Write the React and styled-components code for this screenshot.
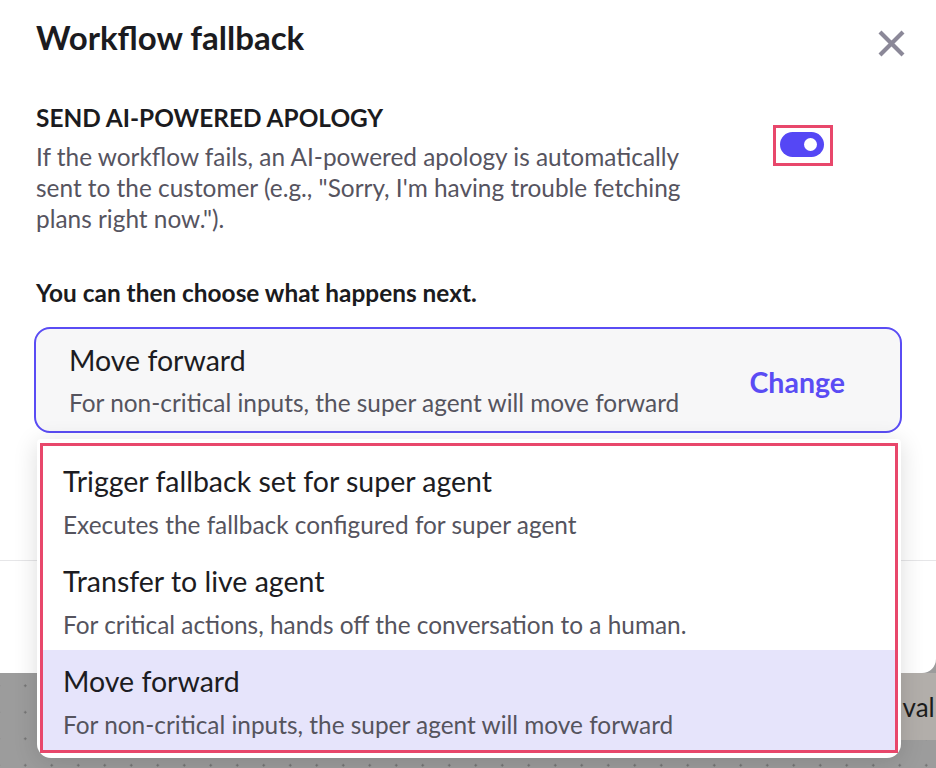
import React from "react";
import styled, { createGlobalStyle } from "styled-components";

const GlobalStyle = createGlobalStyle`
  html, body { margin: 0; padding: 0; }
  body {
    font-family: Lato, "Open Sans", sans-serif;
    background-color: #9c9c9c;
    background-image: radial-gradient(circle, #6f6f6f 0.9px, transparent 1.4px);
    background-size: 26.5px 26.5px;
    background-position: 12px 10px;
  }
  * { box-sizing: border-box; }
`;

const Page = styled.div`
  position: relative;
  width: 936px;
  height: 768px;
  overflow: hidden;
`;

const CanvasNode = styled.div`
  position: absolute;
  left: 850px;
  top: 673px;
  width: 120px;
  height: 67px;
  background: #b2aeaa;
  display: flex;
  align-items: center;
  padding-left: 32px;
  font-size: 26px;
  color: #1c1c1c;
  white-space: nowrap;
`;

const Modal = styled.div`
  position: relative;
  z-index: 1;
  width: 936px;
  height: 673px;
  background: #ffffff;
  border-radius: 0 0 14px 0;
  display: flex;
  flex-direction: column;
  padding: 18px 0 0 36px;
`;

const Header = styled.div`
  display: flex;
  justify-content: space-between;
  align-items: flex-start;
  height: 40px;
  padding-right: 31px;
`;

const Title = styled.h2`
  margin: 0;
  font-size: 33px;
  line-height: 38px;
  font-weight: 700;
  color: #1b1b20;
`;

const CloseButton = styled.button`
  border: none;
  background: none;
  padding: 0;
  margin-top: 12px;
  width: 27px;
  height: 27px;
  display: flex;
  cursor: pointer;
`;

const Section = styled.div`
  display: flex;
  justify-content: space-between;
  align-items: flex-start;
  margin-top: 45px;
  padding-right: 103px;
`;

const SectionText = styled.div`
  width: 670px;
`;

const SectionHeading = styled.div`
  font-size: 24.4px;
  line-height: 30px;
  font-weight: 700;
  color: #1b1b20;
`;

const SectionDesc = styled.p`
  margin: 8px 0 0;
  font-size: 24.4px;
  line-height: 31px;
  color: #56545f;
`;

const ToggleFrame = styled.div`
  margin-top: 22px;
  border: 3px solid #e8476b;
  padding: 4px 6px 6px 4px;
  display: flex;
`;

const Toggle = styled.div`
  width: 44px;
  height: 25px;
  border-radius: 13px;
  background: #5547f5;
  display: flex;
  align-items: center;
  justify-content: flex-end;
  padding-right: 7px;
`;

const Knob = styled.div`
  width: 13px;
  height: 13px;
  border-radius: 50%;
  background: #ffffff;
`;

const Prompt = styled.div`
  margin-top: 44px;
  font-size: 24.4px;
  line-height: 30px;
  font-weight: 700;
  color: #1b1b20;
`;

const SelectedCard = styled.div`
  margin: 19px 34px 0 -2px;
  height: 106px;
  border: 2px solid #5a4cf4;
  border-radius: 16px;
  background: #f7f7f8;
  display: flex;
  align-items: center;
  justify-content: space-between;
  padding: 0 55px 0 33px;
`;

const OptionText = styled.div`
  display: flex;
  flex-direction: column;
  gap: 11px;
`;

const OptionTitle = styled.div`
  font-size: 28.5px;
  line-height: 34px;
  color: #1c1c22;
`;

const OptionSub = styled.div`
  font-size: 24.4px;
  line-height: 30px;
  color: #55545e;
`;

const ChangeLink = styled.button`
  border: none;
  background: none;
  padding: 0;
  margin-top: 4px;
  font-family: inherit;
  font-size: 28.5px;
  font-weight: 700;
  color: #5a4cf4;
  cursor: pointer;
`;

const Footer = styled.div`
  margin-top: auto;
  margin-left: -36px;
  height: 113px;
  border-top: 1px solid #e6e6e8;
`;

const Dropdown = styled.div`
  position: absolute;
  z-index: 2;
  left: 37px;
  top: 439px;
  width: 864px;
  height: 319px;
  background: #ffffff;
  border-radius: 4px 4px 14px 14px;
  box-shadow: 0 4px 24px rgba(0, 0, 0, 0.14);
  padding: 4px 3px 0 3px;
`;

const MenuList = styled.div`
  border: 3px solid #e8476b;
  padding-top: 4px;
  display: flex;
  flex-direction: column;
`;

const MenuItem = styled.div`
  height: 100px;
  padding: 14px 0 0 20px;
  background: ${(p) => (p.$active ? "#e6e4fb" : "#ffffff")};
  display: flex;
  flex-direction: column;
  gap: 12px;
`;

const options = [
  {
    title: "Trigger fallback set for super agent",
    sub: "Executes the fallback configured for super agent",
  },
  {
    title: "Transfer to live agent",
    sub: "For critical actions, hands off the conversation to a human.",
  },
  {
    title: "Move forward",
    sub: "For non-critical inputs, the super agent will move forward",
    active: true,
  },
];

export default function App() {
  return (
    <>
      <GlobalStyle />
      <Page>
        <Modal>
          <Header>
            <Title>Workflow fallback</Title>
            <CloseButton aria-label="Close">
              <svg width="27" height="27" viewBox="0 0 27 27">
                <path
                  d="M2 2 L25 25 M25 2 L2 25"
                  stroke="#8b8898"
                  strokeWidth="4.2"
                  strokeLinecap="butt"
                />
              </svg>
            </CloseButton>
          </Header>
          <Section>
            <SectionText>
              <SectionHeading>SEND AI-POWERED APOLOGY</SectionHeading>
              <SectionDesc>
                If the workflow fails, an AI-powered apology is automatically
                sent to the customer (e.g., "Sorry, I'm having trouble fetching
                plans right now.").
              </SectionDesc>
            </SectionText>
            <ToggleFrame>
              <Toggle>
                <Knob />
              </Toggle>
            </ToggleFrame>
          </Section>
          <Prompt>You can then choose what happens next.</Prompt>
          <SelectedCard>
            <OptionText>
              <OptionTitle>Move forward</OptionTitle>
              <OptionSub>
                For non-critical inputs, the super agent will move forward
              </OptionSub>
            </OptionText>
            <ChangeLink>Change</ChangeLink>
          </SelectedCard>
          <Footer />
        </Modal>
        <CanvasNode>n val</CanvasNode>
        <Dropdown>
          <MenuList>
            {options.map((o) => (
              <MenuItem key={o.title} $active={o.active}>
                <OptionTitle>{o.title}</OptionTitle>
                <OptionSub>{o.sub}</OptionSub>
              </MenuItem>
            ))}
          </MenuList>
        </Dropdown>
      </Page>
    </>
  );
}
